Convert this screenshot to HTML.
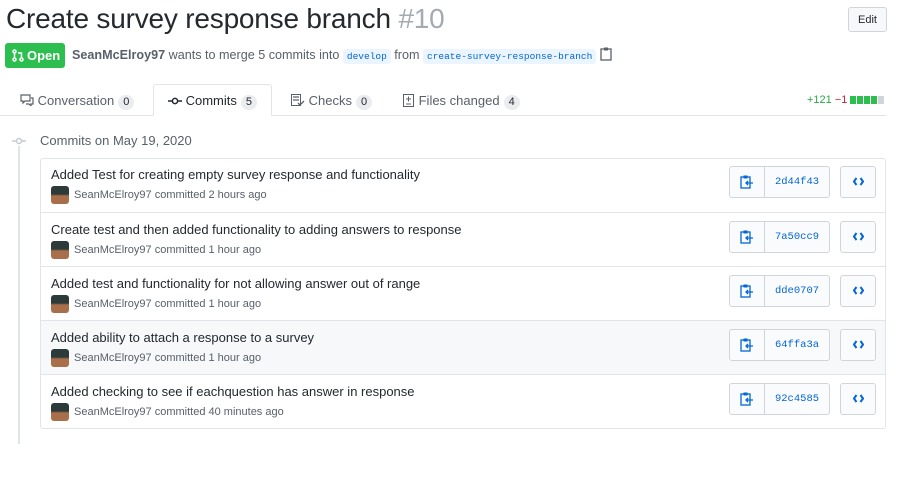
<!DOCTYPE html>
<html><head><style>
*{box-sizing:border-box;margin:0;padding:0}
body{width:898px;height:479px;background:#fff;font-family:"Liberation Sans",sans-serif;color:#24292e;position:relative;overflow:hidden;font-size:13px}
.abs{position:absolute}
h1{position:absolute;left:6px;top:3px;font-size:28px;font-weight:400;letter-spacing:-0.2px;white-space:nowrap}
h1 span{color:#a3aab1}
.edit{left:848px;top:7px;width:39px;height:25px;border:1px solid #d1d5da;border-radius:3px;background:#f6f8fa;font-size:11px;text-align:center;line-height:24px}
.open{left:5px;top:43px;width:60px;height:25px;background:#2cbe4e;border-radius:3px;color:#fff;font-weight:bold;font-size:13px;line-height:25px;padding-left:22px}
.meta{left:72px;top:47px;font-size:12.6px;color:#586069;white-space:nowrap}
.meta b{color:#586069;font-weight:bold}
.br{font-family:"Liberation Mono",monospace;font-size:9.5px;color:#0366d6;background:#eaf5ff;padding:2px 4px;border-radius:3px}
.tabline{left:0;top:115px;width:886px;height:1px;background:#e1e4e8}
.tab{top:85px;height:31px;line-height:31px;font-size:13px;color:#586069;white-space:nowrap}
.tab .c{display:inline-block;background:#eaecef;border-radius:10px;padding:0 5px;font-size:11px;line-height:15px;color:#24292e;margin-left:4px}
.act{left:153px;top:84px;height:32px;line-height:32px;width:119px;border:1px solid #e1e4e8;border-bottom:1px solid #fff;border-radius:3px 3px 0 0;background:#fff;color:#24292e;padding-left:14px}
.box{left:40px;top:158px;width:846px;height:271px;border:1px solid #e1e4e8;border-radius:3px}
.row{position:absolute;left:0;width:844px;height:54px;border-top:1px solid #e1e4e8}
.row .t{position:absolute;left:10px;top:9px;font-size:13px;color:#24292e;white-space:nowrap}
.row .a{position:absolute;left:10px;top:28px;width:18px;height:18px;border-radius:3px;background:linear-gradient(#2c3a3a 0 45%,#a86f4a 55%)}
.row .m{position:absolute;left:33px;top:31px;font-size:11px;color:#586069;white-space:nowrap}
.grp{position:absolute;left:688px;top:8px;width:101px;height:32px;border:1px solid #d1d5da;border-radius:3px;background:#fafbfc}
.grp .sep{position:absolute;left:34px;top:0;width:1px;height:30px;background:#d1d5da}
.grp .sha{position:absolute;left:35px;width:64px;top:0;line-height:30px;text-align:center;font-family:"Liberation Mono",monospace;font-size:10.5px;color:#0366d6}
.cb{position:absolute;left:799px;top:8px;width:36px;height:32px;border:1px solid #d1d5da;border-radius:3px;background:#fafbfc}
.cb svg{position:absolute;left:12px;top:10px}
</style></head><body>
<h1>Create survey response branch <span>#10</span></h1>
<div class="abs edit">Edit</div>
<div class="abs open"><svg class="abs" style="left:7px;top:6px" width="12" height="13" viewBox="0 0 12 13"><g fill="none" stroke="#fff" stroke-width="1.5"><circle cx="2.5" cy="2.5" r="1.5"/><circle cx="2.5" cy="10.5" r="1.5"/><circle cx="9.5" cy="10.5" r="1.5"/><path d="M2.5 4v5M9.5 9V4H6"/></g></svg>Open</div>
<div class="abs meta"><b>SeanMcElroy97</b> wants to merge 5 commits into <span class="br">develop</span> from <span class="br">create-survey-response-branch</span> <svg width="12" height="14" viewBox="0 0 12 14" style="vertical-align:-2px"><rect x="1" y="2" width="10" height="11" fill="none" stroke="#586069" stroke-width="1.3"/><rect x="4" y="0.5" width="4" height="3" fill="#586069"/></svg></div>
<div class="abs tabline"></div>
<div class="abs tab" style="left:20px"><svg width="14" height="12" viewBox="0 0 14 12" style="vertical-align:-1px"><path d="M1 1h9v6H5l-2 2V7H1z M11 4h2v6h-2v2l-2-2H6" fill="none" stroke="#586069" stroke-width="1.2"/></svg> Conversation<span class="c">0</span></div>
<div class="abs tab act"><svg width="14" height="8" viewBox="0 0 14 8" style="vertical-align:0"><circle cx="7" cy="4" r="2.6" fill="none" stroke="#24292e" stroke-width="1.5"/><path d="M0 4h4M10 4h4" stroke="#24292e" stroke-width="1.5"/></svg> Commits<span class="c">5</span></div>
<div class="abs tab" style="left:291px"><svg width="14" height="12" viewBox="0 0 14 12" style="vertical-align:-1px"><rect x="0.5" y="0.5" width="9" height="11" fill="none" stroke="#586069"/><path d="M2 3h6M2 6h6M7 9l2 2 4-4" stroke="#586069" stroke-width="1.3" fill="none"/></svg> Checks<span class="c">0</span></div>
<div class="abs tab" style="left:403px"><svg width="12" height="14" viewBox="0 0 12 14" style="vertical-align:-2px"><rect x="0.5" y="1.5" width="10" height="12" fill="none" stroke="#586069"/><path d="M3 6h5M5.5 3.5v5M3 11h5" stroke="#586069"/></svg> Files changed<span class="c">4</span></div>
<div class="abs" style="left:807px;top:94px;font-size:11px;white-space:nowrap"><span style="color:#28a745">+121</span> <span style="color:#cb2431">−1</span>
<span style="display:inline-block;vertical-align:-1px"><i style="display:inline-block;width:6px;height:8px;background:#2cbe4e;margin-right:1px"></i><i style="display:inline-block;width:6px;height:8px;background:#2cbe4e;margin-right:1px"></i><i style="display:inline-block;width:6px;height:8px;background:#2cbe4e;margin-right:1px"></i><i style="display:inline-block;width:6px;height:8px;background:#2cbe4e;margin-right:1px"></i><i style="display:inline-block;width:6px;height:8px;background:#d1d5da"></i></span></div>
<div class="abs" style="left:18px;top:142px;width:2px;height:302px;background:#e1e4e8"></div>
<svg class="abs" style="left:11px;top:136px" width="16" height="10" viewBox="0 0 16 10"><rect width="16" height="10" fill="#fff"/><circle cx="8" cy="5" r="2.5" fill="none" stroke="#c6cbd1" stroke-width="1.5"/><path d="M1 5h4M11 5h4" stroke="#c6cbd1" stroke-width="1.5"/></svg>
<div class="abs" style="left:40px;top:133px;font-size:13px;color:#586069">Commits on May 19, 2020</div>
<div class="abs box">
<div class="row" style="top:-1px;border-top:none"><div class="t">Added Test for creating empty survey response and functionality</div><div class="a"></div><div class="m">SeanMcElroy97 committed 2 hours ago</div><div class="grp"><svg class="abs" style="left:10px;top:8px" width="13" height="14" viewBox="0 0 13 14"><rect x="1" y="2" width="9" height="11" fill="none" stroke="#0366d6" stroke-width="1.3"/><rect x="3.5" y="0.5" width="4" height="3" fill="#0366d6"/><path d="M6 8h7M8 6l-2 2 2 2" stroke="#0366d6" stroke-width="1.3" fill="none"/></svg><div class="sep"></div><div class="sha">2d44f43</div></div><div class="cb"><svg width="11" height="9" viewBox="0 0 11 9"><path d="M3.5 1L1 4.5 3.5 8M7.5 1L10 4.5 7.5 8" fill="none" stroke="#0366d6" stroke-width="2"/></svg></div></div>
<div class="row" style="top:53px"><div class="t">Create test and then added functionality to adding answers to response</div><div class="a"></div><div class="m">SeanMcElroy97 committed 1 hour ago</div><div class="grp"><svg class="abs" style="left:10px;top:8px" width="13" height="14" viewBox="0 0 13 14"><rect x="1" y="2" width="9" height="11" fill="none" stroke="#0366d6" stroke-width="1.3"/><rect x="3.5" y="0.5" width="4" height="3" fill="#0366d6"/><path d="M6 8h7M8 6l-2 2 2 2" stroke="#0366d6" stroke-width="1.3" fill="none"/></svg><div class="sep"></div><div class="sha">7a50cc9</div></div><div class="cb"><svg width="11" height="9" viewBox="0 0 11 9"><path d="M3.5 1L1 4.5 3.5 8M7.5 1L10 4.5 7.5 8" fill="none" stroke="#0366d6" stroke-width="2"/></svg></div></div>
<div class="row" style="top:107px"><div class="t">Added test and functionality for not allowing answer out of range</div><div class="a"></div><div class="m">SeanMcElroy97 committed 1 hour ago</div><div class="grp"><svg class="abs" style="left:10px;top:8px" width="13" height="14" viewBox="0 0 13 14"><rect x="1" y="2" width="9" height="11" fill="none" stroke="#0366d6" stroke-width="1.3"/><rect x="3.5" y="0.5" width="4" height="3" fill="#0366d6"/><path d="M6 8h7M8 6l-2 2 2 2" stroke="#0366d6" stroke-width="1.3" fill="none"/></svg><div class="sep"></div><div class="sha">dde0707</div></div><div class="cb"><svg width="11" height="9" viewBox="0 0 11 9"><path d="M3.5 1L1 4.5 3.5 8M7.5 1L10 4.5 7.5 8" fill="none" stroke="#0366d6" stroke-width="2"/></svg></div></div>
<div class="row" style="top:161px;background:#f6f8fa"><div class="t">Added ability to attach a response to a survey</div><div class="a"></div><div class="m">SeanMcElroy97 committed 1 hour ago</div><div class="grp"><svg class="abs" style="left:10px;top:8px" width="13" height="14" viewBox="0 0 13 14"><rect x="1" y="2" width="9" height="11" fill="none" stroke="#0366d6" stroke-width="1.3"/><rect x="3.5" y="0.5" width="4" height="3" fill="#0366d6"/><path d="M6 8h7M8 6l-2 2 2 2" stroke="#0366d6" stroke-width="1.3" fill="none"/></svg><div class="sep"></div><div class="sha">64ffa3a</div></div><div class="cb"><svg width="11" height="9" viewBox="0 0 11 9"><path d="M3.5 1L1 4.5 3.5 8M7.5 1L10 4.5 7.5 8" fill="none" stroke="#0366d6" stroke-width="2"/></svg></div></div>
<div class="row" style="top:215px"><div class="t">Added checking to see if eachquestion has answer in response</div><div class="a"></div><div class="m">SeanMcElroy97 committed 40 minutes ago</div><div class="grp"><svg class="abs" style="left:10px;top:8px" width="13" height="14" viewBox="0 0 13 14"><rect x="1" y="2" width="9" height="11" fill="none" stroke="#0366d6" stroke-width="1.3"/><rect x="3.5" y="0.5" width="4" height="3" fill="#0366d6"/><path d="M6 8h7M8 6l-2 2 2 2" stroke="#0366d6" stroke-width="1.3" fill="none"/></svg><div class="sep"></div><div class="sha">92c4585</div></div><div class="cb"><svg width="11" height="9" viewBox="0 0 11 9"><path d="M3.5 1L1 4.5 3.5 8M7.5 1L10 4.5 7.5 8" fill="none" stroke="#0366d6" stroke-width="2"/></svg></div></div>
</div>
</body></html>
